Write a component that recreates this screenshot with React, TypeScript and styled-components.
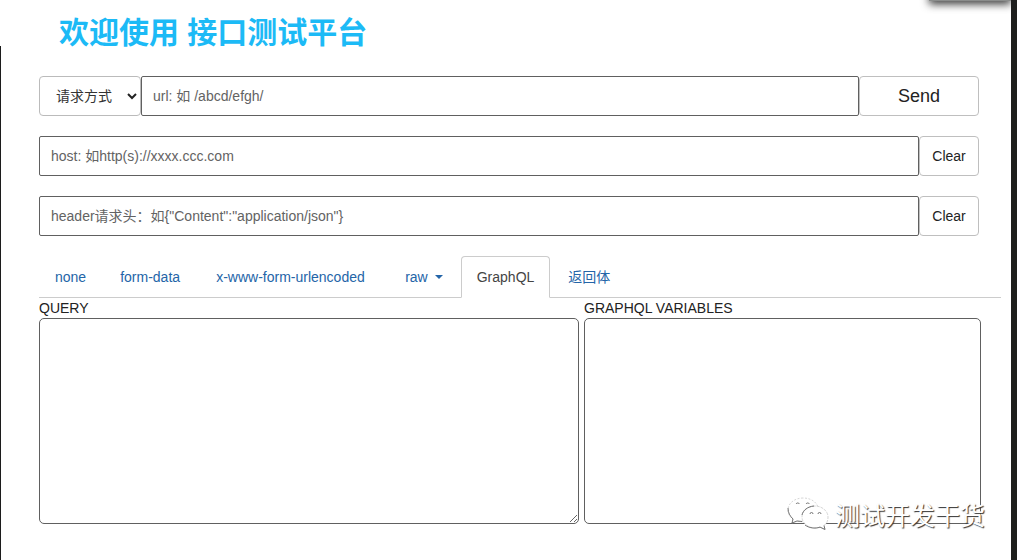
import React from "react";
import styled, { createGlobalStyle, css } from "styled-components";

const GlobalStyle = createGlobalStyle`
  *, *::before, *::after { box-sizing: border-box; }
  body {
    margin: 0;
    background: #fff;
    color: #222;
    font: 14px/20px "Liberation Sans", "Noto Sans CJK SC", sans-serif;
  }
  button, input, select, textarea { font: inherit; color: inherit; }
`;

const Page = styled.div`
  position: relative;
  min-height: 100vh;
  padding: 13px 10px 36px 39px;
  border-right: 6px solid #1e1f1d;
  background: linear-gradient(#1c1c1c, #1c1c1c) 0 46px / 1px 100% no-repeat #fff;
  overflow: hidden;
`;

const CornerShadow = styled.div`
  position: absolute;
  top: -10px;
  right: 0;
  width: 82px;
  height: 11px;
  background: #8a8c8b;
  box-shadow: 0 3px 8px rgba(0, 0, 0, 0.8);
`;

const Title = styled.h1`
  margin: 0 0 23px 20px;
  font-size: 30px;
  line-height: 40px;
  font-weight: 700;
  color: #1cbaf6;
`;

const RequestForm = styled.form`
  display: flex;
  flex-direction: column;
  gap: 20px;
  margin: 0 22px 20px 0;
`;

const Row = styled.div`
  display: flex;
  height: 40px;
`;

const MethodBox = styled.div`
  position: relative;
  flex: 0 0 102px;
  display: flex;
`;

const MethodSelect = styled.select`
  appearance: none;
  width: 100%;
  padding: 0 16px;
  border: 1px solid #bbb;
  border-radius: 4px;
  background: #fff;
  color: #333;
`;

const Chevron = styled.svg`
  position: absolute;
  top: 16px;
  right: 4px;
  pointer-events: none;
`;

const TextInput = styled.input`
  flex: 1;
  min-width: 0;
  padding: 0 11px;
  border: 1px solid #606060;
  border-radius: 2px;
  background: #fff;
  &::placeholder { color: #636363; opacity: 1; }
`;

const Button = styled.button<{ $large?: boolean }>`
  flex: 0 0 ${(p) => (p.$large ? 120 : 60)}px;
  padding: 0;
  border: 1px solid #bfbfbf;
  border-radius: 4px;
  background: #fff;
  font-size: ${(p) => (p.$large ? 18 : 14)}px;
`;

const Tabs = styled.nav`
  display: flex;
  gap: 2px;
  border-bottom: 1px solid #ccc;
`;

const Tab = styled.a<{ $active?: boolean; $width?: number }>`
  display: flex;
  align-items: center;
  gap: 7px;
  min-width: ${(p) => p.$width ?? 0}px;
  margin-bottom: -1px;
  padding: 10px 15px;
  border: 1px solid transparent;
  border-radius: 4px 4px 0 0;
  color: #2465a8;
  text-decoration: none;
  ${(p) =>
    p.$active &&
    css`
      border-color: #ccc #ccc #fff;
      background: #fff;
      color: #444;
    `}
`;

const Caret = styled.span`
  border-top: 4px solid currentColor;
  border-left: 4px solid transparent;
  border-right: 4px solid transparent;
`;

const Editors = styled.div`
  display: grid;
  grid-template-columns: 540fr 397fr;
  gap: 5px;
  margin-right: 20px;
`;

const Editor = styled.label`
  display: flex;
  flex-direction: column;
`;

const EditorArea = styled.textarea<{ $fixed?: boolean }>`
  height: 206px;
  padding: 6px;
  border: 1px solid #606060;
  border-radius: 5px;
  background: #fff;
  resize: ${(p) => (p.$fixed ? "none" : "both")};
`;

const Watermark = styled.div`
  position: absolute;
  right: 26px;
  bottom: 28px;
  display: flex;
  align-items: center;
  gap: 6px;
  color: #fff;
  font-family: "Noto Sans CJK SC", sans-serif;
  font-size: 25px;
  line-height: 36px;
  text-shadow: 1px 1px 1px #333;
`;

const WechatLogo = () => (
  <svg width="42" height="36" viewBox="0 0 42 36" aria-hidden="true">
    <g fill="#fff" stroke="#bbb" strokeWidth="0.6">
      <path
        strokeDasharray="2 1.5"
        d="M16 2C8 2 1 7 1 14c0 4 2 7 5 9l-1 4 5-2c2 .6 4 .8 7 .6 10 0 15-5 15-11C31 7 25 2 16 2z"
      />
      <path
        strokeDasharray="3 1"
        d="M28 10c-7 0-13 5-13 11s6 11 13 11c2 0 4-.4 5-.9l5 2.400-1-4c3-2 4-5 4-8.500C41 15 35 10 28 10z"
      />
    </g>
    <g fill="none" stroke="#666" strokeWidth="0.9">
      <path d="M18 29c4 3 10 4 15 2.100l5 2.400-1-4M1 12c0 5 2 8 5 11l-1 4 5-2 5 .5" />
      <path d="M15 19c1-5 6-8.500 12-9" />
      <path d="M9 8a2 2 0 0 1 3.500 0M19 8a2 2 0 0 1 3.500 0M23 18a1.500 1.500 0 0 1 3 0M31 18a1.500 1.500 0 0 1 3 0" />
    </g>
  </svg>
);

export default function App() {
  return (
    <>
      <GlobalStyle />
      <Page>
        <CornerShadow />
        <Title>欢迎使用 接口测试平台</Title>
        <RequestForm onSubmit={(e) => e.preventDefault()}>
          <Row>
            <MethodBox>
              <MethodSelect aria-label="请求方式" defaultValue="">
                <option value="">请求方式</option>
              </MethodSelect>
              <Chevron width="10" height="8" viewBox="0 0 10 8" aria-hidden="true">
                <path d="M1 2l4 4 4-4" fill="none" stroke="#222" strokeWidth="2" />
              </Chevron>
            </MethodBox>
            <TextInput aria-label="url" placeholder="url: 如 /abcd/efgh/" />
            <Button type="submit" $large>Send</Button>
          </Row>
          <Row>
            <TextInput aria-label="host" placeholder="host: 如http(s)://xxxx.ccc.com" />
            <Button type="button">Clear</Button>
          </Row>
          <Row>
            <TextInput
              aria-label="header"
              placeholder={'header请求头：如{"Content":"application/json"}'}
            />
            <Button type="button">Clear</Button>
          </Row>
        </RequestForm>
        <Tabs>
          <Tab href="#none">none</Tab>
          <Tab href="#form-data" $width={94}>form-data</Tab>
          <Tab href="#urlencoded" $width={187}>x-www-form-urlencoded</Tab>
          <Tab href="#raw">raw<Caret /></Tab>
          <Tab href="#graphql" $active aria-current="page">GraphQL</Tab>
          <Tab href="#response">返回体</Tab>
        </Tabs>
        <Editors>
          <Editor>
            QUERY
            <EditorArea />
          </Editor>
          <Editor>
            GRAPHQL VARIABLES
            <EditorArea $fixed />
          </Editor>
        </Editors>
        <Watermark>
          <WechatLogo />
          <span>测试开发干货</span>
        </Watermark>
      </Page>
    </>
  );
}
